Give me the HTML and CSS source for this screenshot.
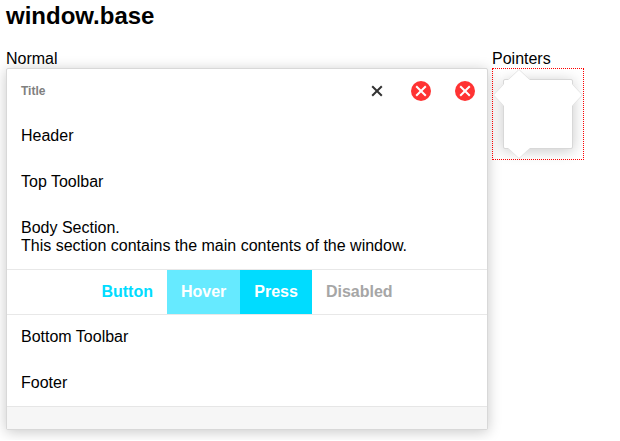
FILE: index.html
```html
<!DOCTYPE html>
<html lang="en">
<head>
<meta charset="utf-8">
<title>window.base</title>
<link rel="stylesheet" href="styles.css">
</head>
<body>
<h1 class="heading">window.base</h1>
<main class="samples">
  <section class="sample sample-normal">
    <div class="label">Normal</div>
    <div class="window">
      <header class="titlebar">
        <h2 class="title">Title</h2>
        <button class="close" type="button" aria-label="Close">
          <svg width="20" height="20" viewBox="0 0 20 20"><path class="cross cross-dark" d="M5.2 5.2l9.6 9.6M14.8 5.2l-9.6 9.6"/></svg>
        </button>
        <button class="close" type="button" aria-label="Close, hover">
          <svg width="20" height="20" viewBox="0 0 20 20"><circle class="disc" cx="10" cy="10" r="10"/><path class="cross" d="M5.2 5.2l9.6 9.6M14.8 5.2l-9.6 9.6"/></svg>
        </button>
        <button class="close" type="button" aria-label="Close, pressed">
          <svg width="20" height="20" viewBox="0 0 20 20"><circle class="disc" cx="10" cy="10" r="10"/><path class="cross" d="M5.2 5.2l9.6 9.6M14.8 5.2l-9.6 9.6"/></svg>
        </button>
      </header>
      <div class="row">Header</div>
      <div class="row">Top Toolbar</div>
      <div class="row">Body Section.<br>This section contains the main contents of the window.</div>
      <div class="buttons">
        <button class="button" type="button">Button</button>
        <button class="button button-hover" type="button">Hover</button>
        <button class="button button-press" type="button">Press</button>
        <button class="button" type="button" disabled>Disabled</button>
      </div>
      <div class="row row-ruled">Bottom Toolbar</div>
      <div class="row">Footer</div>
      <div class="status"></div>
    </div>
  </section>
  <section class="sample">
    <div class="label">Pointers</div>
    <div class="pointer-area">
      <div class="window pointer-window">
        <svg class="pointer pointer-top" width="22" height="11" viewBox="0 0 22 11"><path d="M0 11L11 0l11 11z"/><path class="edge" d="M.5 10.5L11 .5l10.5 10"/></svg>
        <svg class="pointer pointer-right" width="11" height="22" viewBox="0 0 11 22"><path d="M0 0l11 11L0 22z"/><path class="edge" d="M.5 .5l10 10.5-10 10.5"/></svg>
        <svg class="pointer pointer-bottom" width="22" height="11" viewBox="0 0 22 11"><path d="M0 0l11 11L22 0z"/><path class="edge" d="M.5 .5L11 10.5 21.5 .5"/></svg>
        <svg class="pointer pointer-left" width="11" height="22" viewBox="0 0 11 22"><path d="M11 0L0 11l11 11z"/><path class="edge" d="M10.5 .5L.5 11l10 10.5"/></svg>
      </div>
    </div>
  </section>
</main>
</body>
</html>
```
FILE: styles.css
```css
* {
  box-sizing: border-box;
}

body {
  margin: 0;
  padding: 2px 6px 10px;
  background: #fff;
  color: #000;
  font: 16px/18px "Liberation Sans", Arial, sans-serif;
}

.heading {
  margin: 0 0 20px;
  font-size: 24px;
  line-height: 28px;
}

.samples {
  display: flex;
  align-items: flex-start;
  gap: 4px;
}

.sample-normal {
  flex: 0 1 482px;
}

.window {
  border: 1px solid #d8d8d8;
  border-radius: 2px;
  background: #fff;
  box-shadow: 0 2px 14px rgba(0, 0, 0, 0.22);
}

.titlebar {
  display: flex;
  align-items: center;
  padding-left: 14px;
}

.title {
  flex: 1;
  margin: 0;
  color: #808080;
  font-size: 12px;
}

.close {
  display: grid;
  place-items: center;
  width: 44px;
  height: 44px;
  padding: 0;
  border: 0;
  background: none;
}

.disc {
  fill: #ff3333;
}

.cross {
  fill: none;
  stroke: #fff;
  stroke-width: 2;
}

.cross-dark {
  stroke: #333;
}

.row {
  padding: 14px;
}

.row-ruled {
  box-shadow: inset 0 1px #e8e8e8;
}

.buttons {
  display: flex;
  justify-content: center;
  border-top: 1px solid #e8e8e8;
}

.button {
  height: 44px;
  padding: 0 14px;
  border: 0;
  background: none;
  color: #00dcff;
  font: inherit;
  font-weight: bold;
}

.button-hover {
  background: #66eaff;
  color: #fff;
}

.button-press {
  background: #00dcff;
  color: #fff;
}

.button:disabled {
  color: #a6a6a6;
}

.status {
  height: 23px;
  border-top: 1px solid #e6e6e6;
  background: #f6f6f6;
}

.pointer-area {
  width: 92px;
  padding: 10px;
  border: 1px dotted #f00;
}

.pointer-window {
  position: relative;
  height: 70px;
}

.pointer {
  position: absolute;
  fill: #fff;
}

.edge {
  fill: none;
  stroke: #e4e4e4;
}

.pointer-top {
  top: -11px;
  left: 4px;
}

.pointer-right {
  top: 4px;
  right: -11px;
}

.pointer-bottom {
  bottom: -11px;
  left: 4px;
}

.pointer-left {
  top: 4px;
  left: -11px;
}
```
